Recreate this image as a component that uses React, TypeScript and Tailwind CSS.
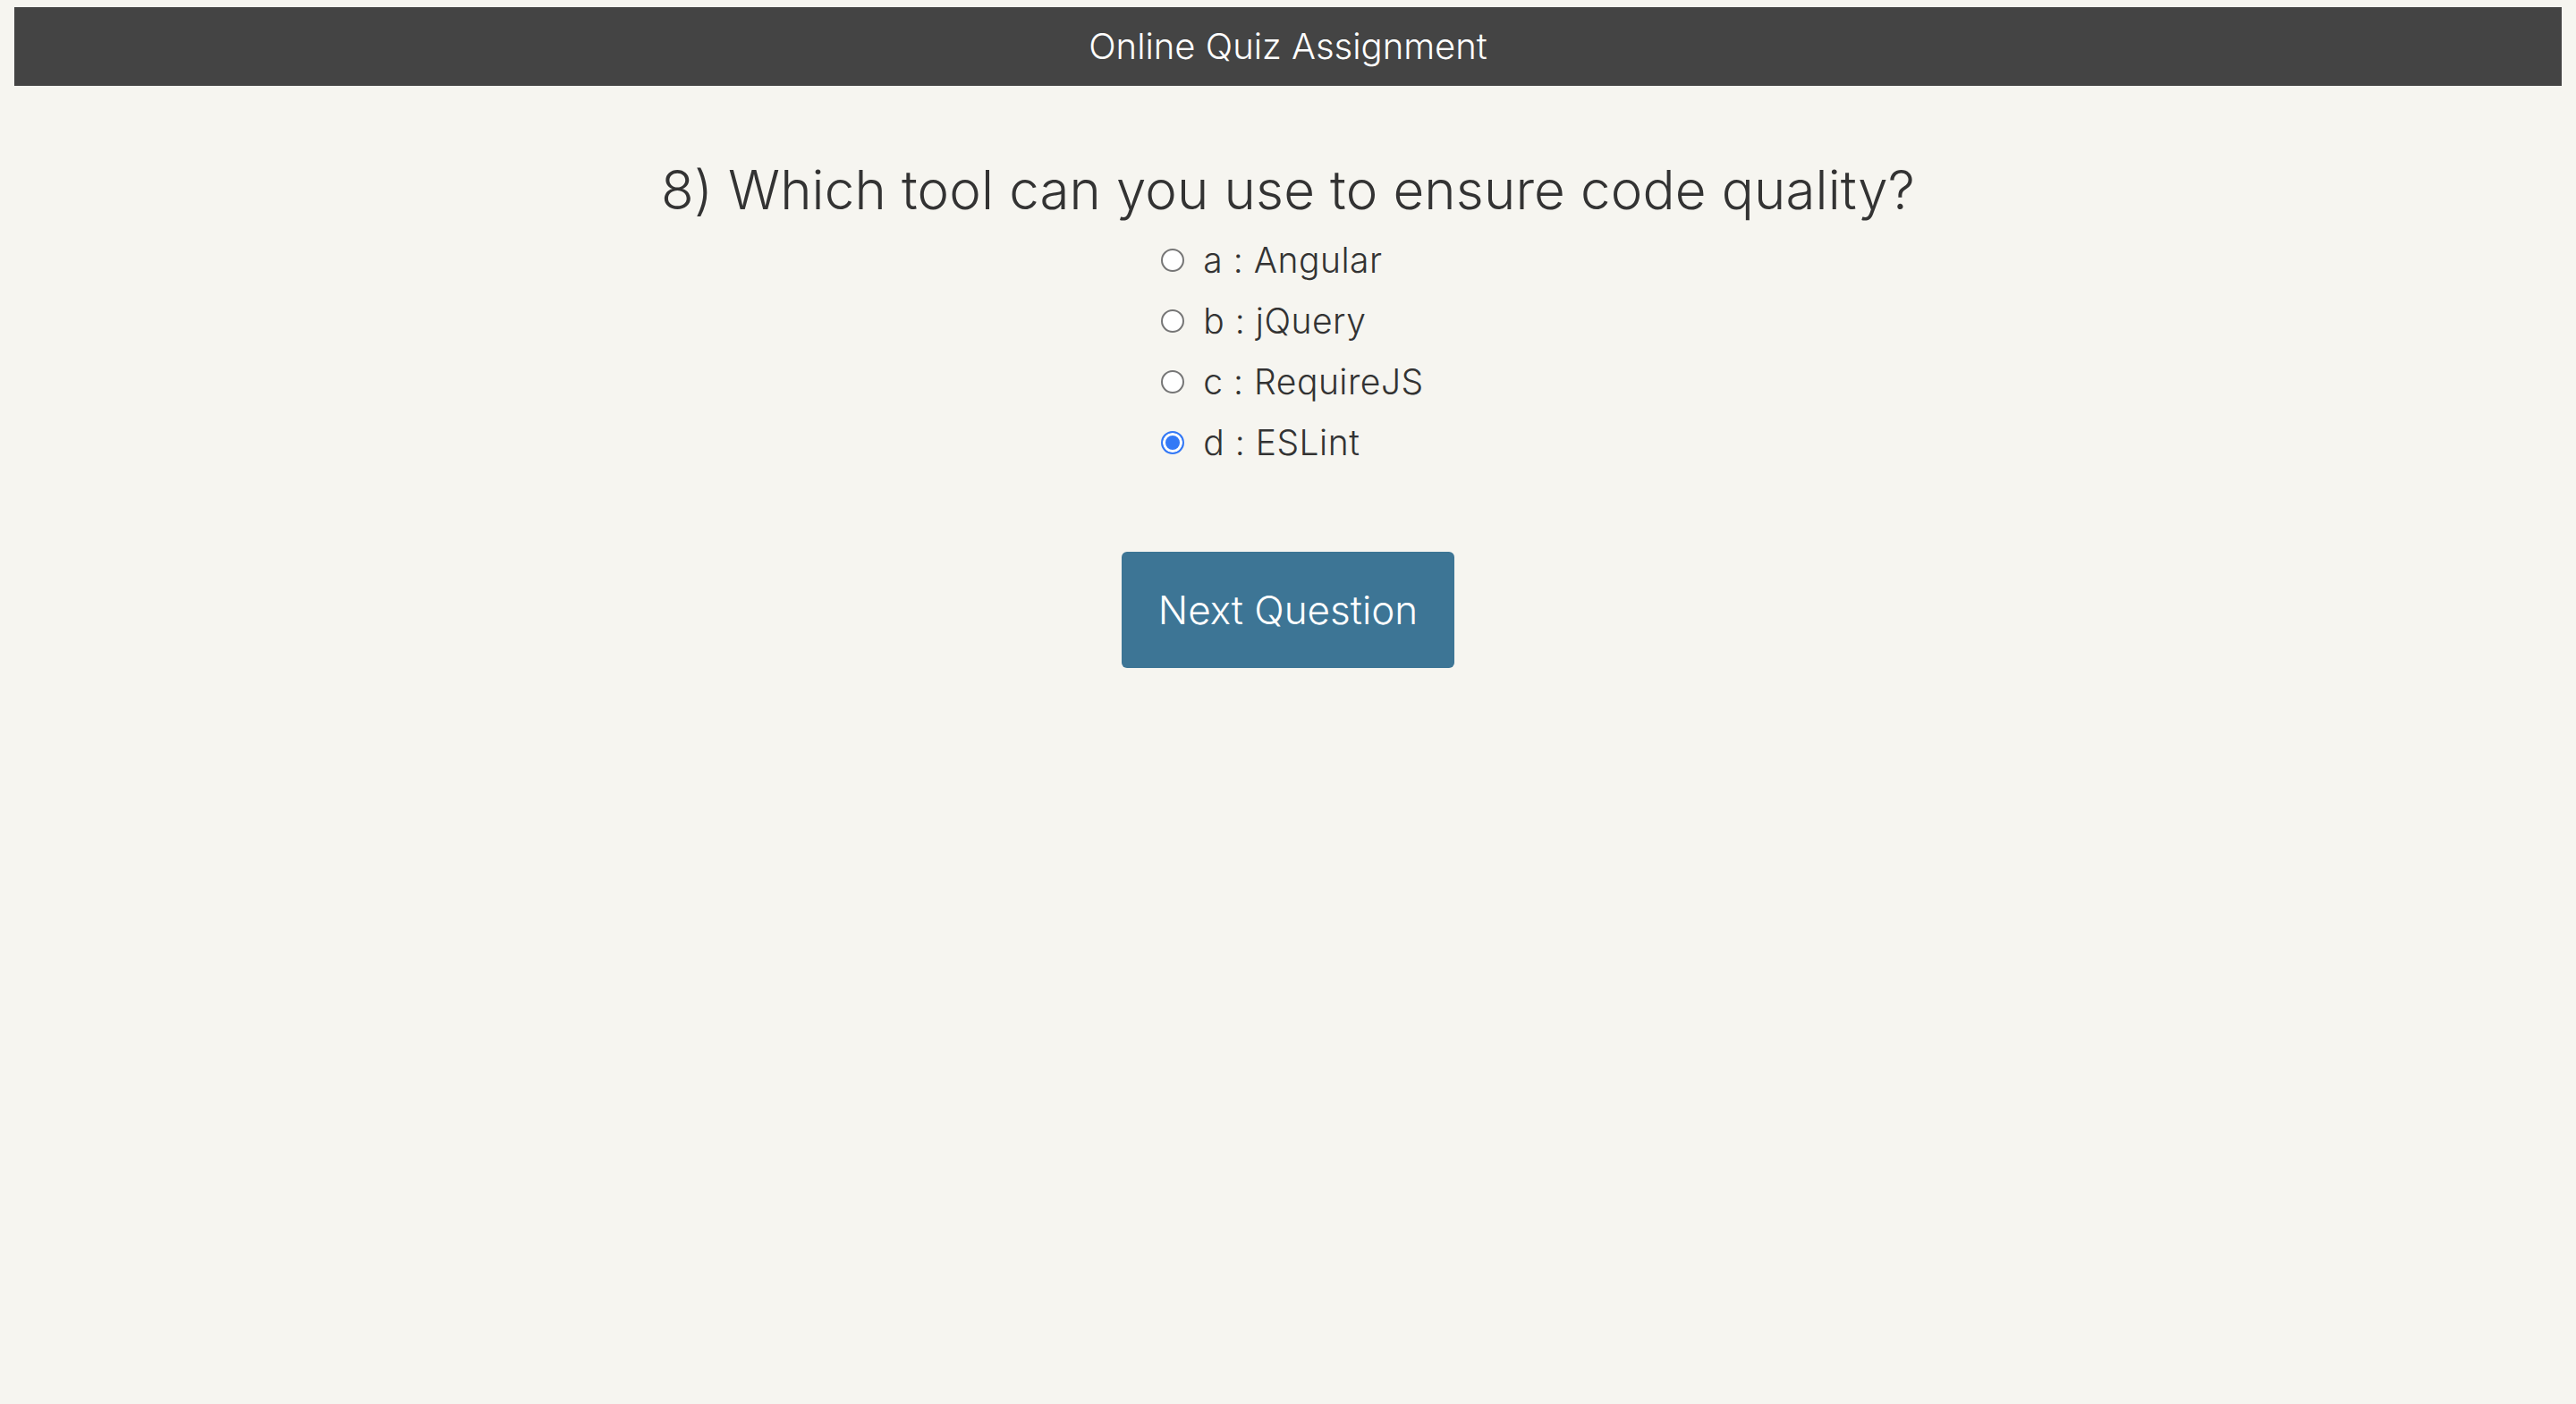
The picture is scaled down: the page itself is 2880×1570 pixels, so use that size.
import React, { useState } from 'react';

const options = [
  { key: 'a', label: 'Angular' },
  { key: 'b', label: 'jQuery' },
  { key: 'c', label: 'RequireJS' },
  { key: 'd', label: 'ESLint' },
];

export default function App() {
  const [answer, setAnswer] = useState('d');

  return (
    <div className="min-h-screen bg-[#f6f5f0] px-4 pt-2 font-['Inter','Noto_Sans',sans-serif] text-[#333]">
      <header className="flex h-[88px] items-center justify-center bg-[#444444] text-[40px] font-light text-white">
        Online Quiz Assignment
      </header>

      <main className="flex flex-col items-center">
        <h2 className="mt-[80px] text-[60px] font-light leading-[72px] tracking-[0.15px]">
          8) Which tool can you use to ensure code quality?
        </h2>

        <div className="mt-[9px] flex flex-col items-start pl-[10px]">
          {options.map((o) => (
            <label key={o.key} className="flex h-[68px] items-center gap-[21px] text-[39px] font-light">
              <input
                type="radio"
                name="q8"
                value={o.key}
                checked={answer === o.key}
                onChange={() => setAnswer(o.key)}
                className="m-0 h-[26px] w-[26px] appearance-none rounded-full border-[2.5px] border-[#767676] bg-white checked:border-[#3479f6] checked:bg-[#3479f6] checked:shadow-[inset_0_0_0_3px_white]"
              />
              <span className="tracking-[0.5px]">
                {o.key}&nbsp;:&nbsp;{o.label}
              </span>
            </label>
          ))}
        </div>

        <button className="mt-[88px] h-[130px] w-[372px] rounded-md bg-[#3d7595] text-[44px] font-light text-white">
          Next Question
        </button>
      </main>
    </div>
  );
}
